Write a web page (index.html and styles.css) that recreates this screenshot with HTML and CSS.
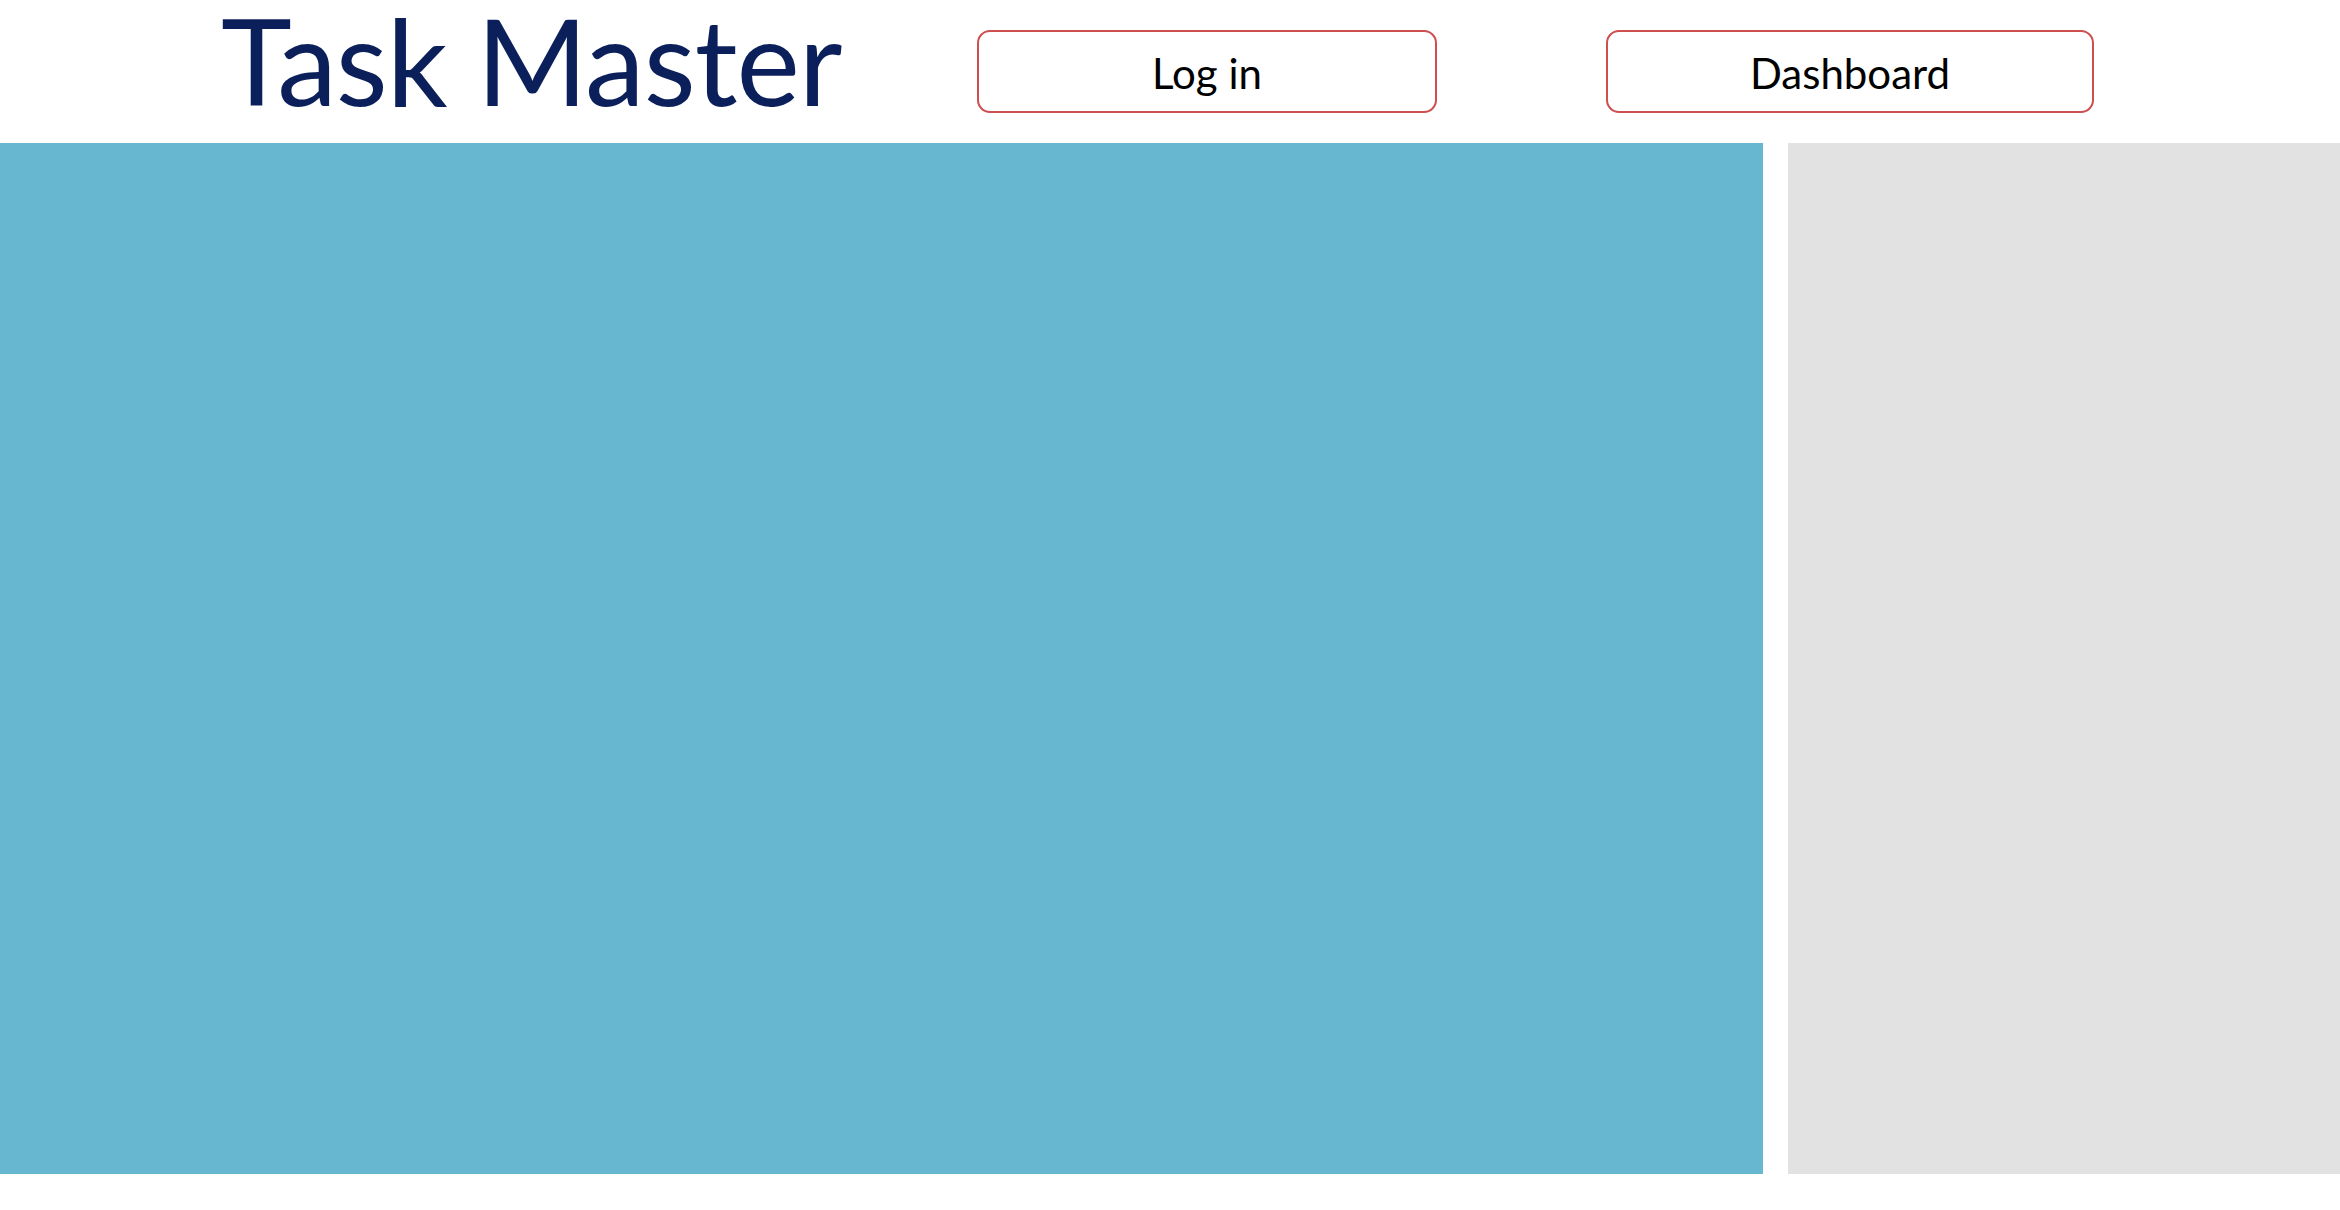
FILE: index.html
```html
<!DOCTYPE html>
<html lang="en">
<head>
<meta charset="utf-8">
<title>Task Master</title>
<link rel="stylesheet" href="styles.css">
</head>
<body>
<header class="topbar">
  <h1 class="brand">Task Master</h1>
  <nav class="nav">
    <a class="btn btn-login" href="#">Log in</a>
    <a class="btn btn-dash" href="#">Dashboard</a>
  </nav>
</header>
<main class="layout">
  <section class="board"></section>
  <aside class="sidebar"></aside>
</main>
</body>
</html>
```

FILE: styles.css
```css
html, body {
  margin: 0;
  padding: 0;
  background: #ffffff;
}
body {
  font-family: Lato, "Open Sans", "Liberation Sans", sans-serif;
}
.topbar {
  height: 143px;
  display: flex;
  align-items: flex-start;
  padding-left: 221px;
  box-sizing: border-box;
}
.brand {
  margin: 0;
  padding: 0;
  font-weight: 400;
  font-size: 120px;
  line-height: 120px;
  letter-spacing: -1px;
  color: #0b1f5b;
  width: 756px;
  white-space: nowrap;
}
.nav {
  display: flex;
  gap: 169px;
  margin-top: 30px;
}
.btn {
  display: flex;
  align-items: center;
  justify-content: center;
  height: 83px;
  box-sizing: border-box;
  border: 2px solid #cd4f4f;
  border-radius: 13px;
  color: #000;
  text-decoration: none;
  font-size: 42px;
  padding-top: 2px;
}
.btn-login { width: 460px; }
.btn-dash { width: 488px; }
.layout {
  display: flex;
  gap: 25px;
  height: 1031px;
}
.board {
  flex: 0 0 1763px;
  background: #67b7d0;
}
.sidebar {
  flex: 1;
  background: #e2e2e2;
}
```
